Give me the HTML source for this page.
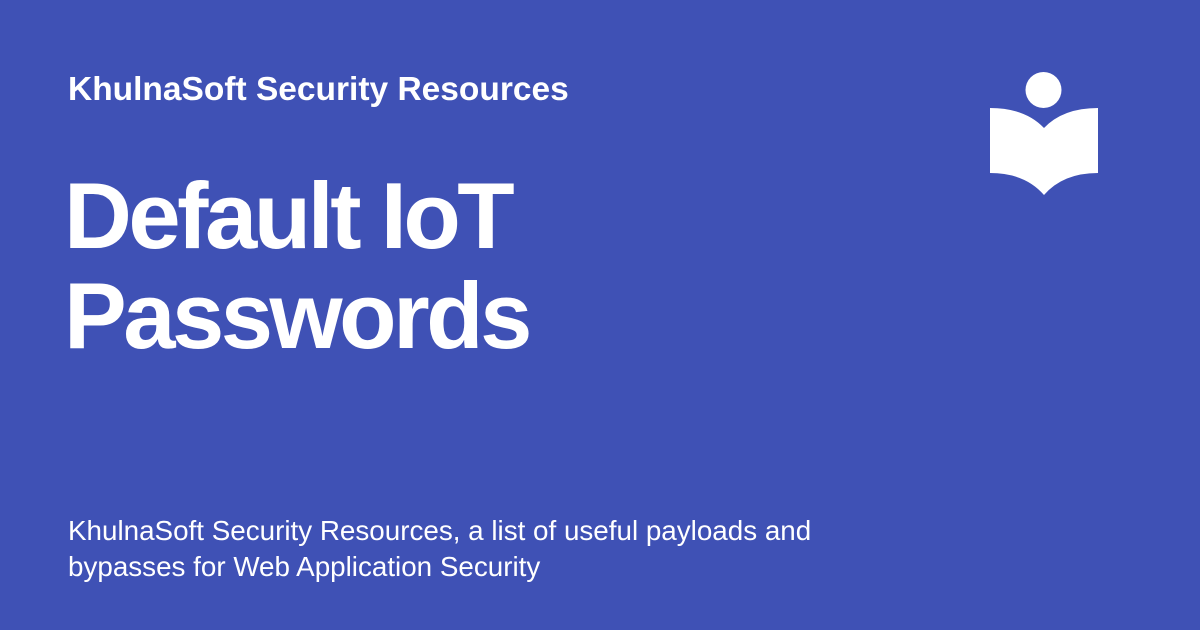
<!DOCTYPE html>
<html><head><meta charset="utf-8"><style>
html,body{margin:0;padding:0}
body{width:1200px;height:630px;background:#3f51b5;position:relative;overflow:hidden;font-family:"Liberation Sans",sans-serif;color:#fff}
.site{position:absolute;left:68px;top:71px;font-size:33.5px;font-weight:bold;white-space:nowrap;letter-spacing:0}
.title{position:absolute;left:64px;top:166px;font-size:94px;font-weight:bold;line-height:100px;letter-spacing:-3.5px;white-space:nowrap}
.desc{position:absolute;left:68px;top:513px;font-size:27.8px;line-height:36px;width:820px;white-space:nowrap}
svg{position:absolute;left:0;top:0}
</style></head><body>
<div class="site">KhulnaSoft Security Resources</div>
<div class="title">Default IoT<br>Passwords</div>
<div class="desc">KhulnaSoft Security Resources, a list of useful payloads and<br>bypasses for Web Application Security</div>
<svg width="1200" height="630"><circle cx="1043.5" cy="90" r="18" fill="#fff"/>
<path d="M990 108 Q1025 108 1044 128 Q1063 108 1098 108 L1098 173 Q1063 173 1044 195 Q1025 173 990 173 Z" fill="#fff"/></svg>
</body></html>
